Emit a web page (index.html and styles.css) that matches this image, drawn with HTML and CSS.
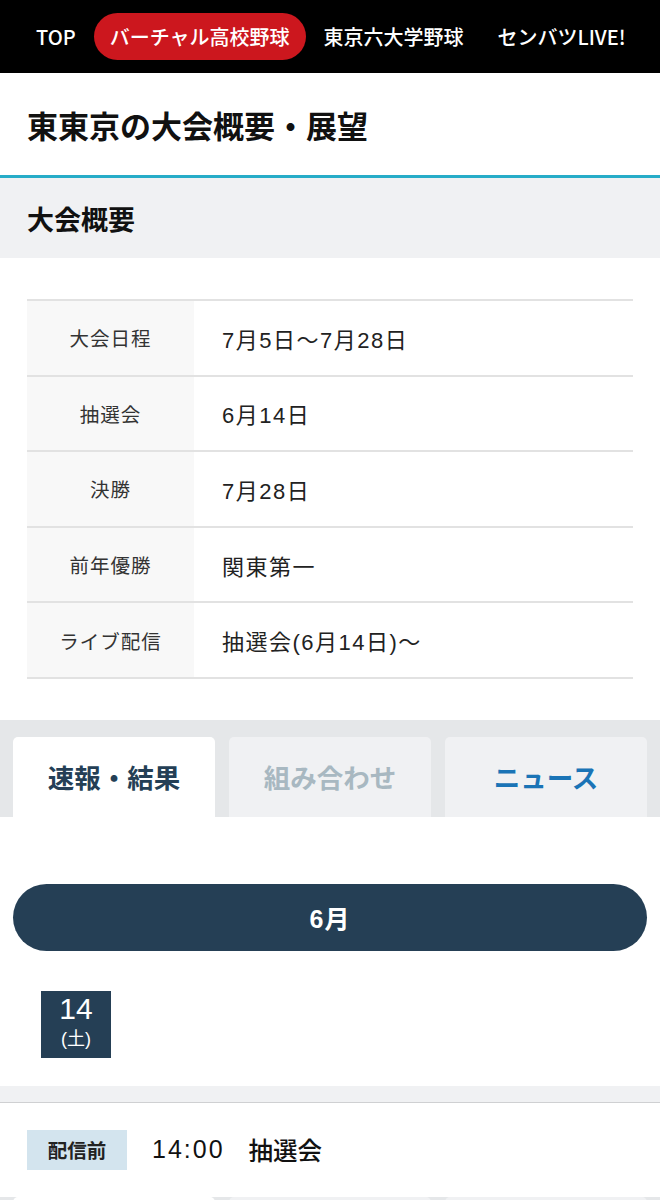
FILE: index.html
```html
<!DOCTYPE html>
<html lang="ja">
<head>
    <meta charset="UTF-8">
    <meta name="viewport" content="width=device-width, initial-scale=1.0">
    <title>東東京の大会概要・展望</title>
    <link rel="stylesheet" href="styles.css">
</head>
<body>

    <!-- Global Navigation -->
    <nav class="global-nav">
        <a class="nav-item" href="#">TOP</a>
        <a class="nav-item is-active" href="#">バーチャル高校野球</a>
        <a class="nav-item" href="#">東京六大学野球</a>
        <a class="nav-item" href="#">センバツLIVE!</a>
    </nav>

    <!-- Page Title -->
    <header class="page-title">
        <h1>東東京の大会概要・展望</h1>
    </header>

    <!-- Overview -->
    <section class="section-head">
        <h2>大会概要</h2>
    </section>

    <div class="overview">
        <table class="overview-table">
            <tr><th>大会日程</th><td>7月5日〜7月28日</td></tr>
            <tr><th>抽選会</th><td>6月14日</td></tr>
            <tr><th>決勝</th><td>7月28日</td></tr>
            <tr><th>前年優勝</th><td>関東第一</td></tr>
            <tr><th>ライブ配信</th><td>抽選会(6月14日)〜</td></tr>
        </table>
    </div>

    <!-- Tabs -->
    <div class="tabs">
        <a class="tab is-current" href="#">速報・結果</a>
        <a class="tab is-disabled" href="#">組み合わせ</a>
        <a class="tab is-link" href="#">ニュース</a>
    </div>

    <!-- Schedule -->
    <div class="schedule">
        <div class="month-bar">6月</div>
        <div class="date-box">
            <span class="date-day">14</span>
            <span class="date-week">(土)</span>
        </div>
    </div>

    <div class="divider"></div>

    <div class="game-row">
        <span class="status-badge">配信前</span>
        <span class="game-time">14:00</span>
        <span class="game-name">抽選会</span>
    </div>

    <!-- Next tab bar (cut off) -->
    <div class="tabs tabs-bottom">
        <span class="tab is-current"></span>
        <span class="tab"></span>
        <span class="tab"></span>
    </div>

</body>
</html>
```

FILE: styles.css
```css
/* Base */
body {
    margin: 0;
    padding: 0;
    font-family: "Liberation Sans", "Noto Sans CJK JP", sans-serif;
    color: #111;
    background-color: #fff;
}

a {
    text-decoration: none;
}

/* Global Navigation */
.global-nav {
    display: flex;
    align-items: center;
    gap: 2px;
    height: 73px;
    padding-left: 20px;
    background-color: #000;
    white-space: nowrap;
    overflow: hidden;
    font-family: "Noto Sans CJK JP", sans-serif;
}

.nav-item {
    display: flex;
    align-items: center;
    height: 47px;
    padding: 0 16px;
    color: #fff;
    font-size: 20px;
    font-weight: 500;
    border-radius: 24px;
}

.nav-item.is-active {
    background-color: #cc171e;
}

/* Page Title */
.page-title {
    display: flex;
    align-items: center;
    height: 102px;
    padding: 0 27px;
    border-bottom: 3px solid #26acc8;
}

.page-title h1 {
    margin: 0;
    font-size: 31px;
    font-weight: 700;
    color: #111;
}

/* Section Head */
.section-head {
    display: flex;
    align-items: center;
    height: 80px;
    padding: 0 27px;
    background-color: #f0f1f3;
}

.section-head h2 {
    margin: 0;
    font-size: 27px;
    font-weight: 700;
    color: #111;
}

/* Overview Table */
.overview {
    padding: 41px 27px 41px;
}

.overview-table {
    width: 100%;
    border-collapse: collapse;
    border-top: 2px solid #e2e2e2;
}

.overview-table tr {
    height: 75.6px;
    border-bottom: 2px solid #e2e2e2;
}

.overview-table th {
    width: 167px;
    padding: 0;
    background-color: #f8f8f8;
    font-size: 19.5px;
    font-weight: 400;
    letter-spacing: 1px;
    color: #333;
    text-align: center;
}

.overview-table td {
    padding: 0 0 0 28px;
    font-size: 22px;
    letter-spacing: 1.5px;
    color: #222;
}

/* Tabs */
.tabs {
    display: grid;
    grid-template-columns: repeat(3, 1fr);
    gap: 14px;
    padding: 17px 13px 0;
    background-color: #e5e7e9;
}

.tab {
    display: flex;
    align-items: center;
    justify-content: center;
    height: 80px;
    background-color: #f0f1f3;
    border-radius: 5px 5px 0 0;
    font-size: 26.5px;
    font-weight: 700;
}

.tab.is-current {
    background-color: #fff;
    color: #243f56;
}

.tab.is-disabled {
    color: #a8b8c1;
}

.tab.is-link {
    color: #1a74b6;
}

.tabs-bottom {
    padding-top: 0;
}

/* Schedule */
.schedule {
    padding: 67px 13px 28px;
}

.month-bar {
    display: flex;
    align-items: center;
    justify-content: center;
    height: 67px;
    border-radius: 34px;
    background-color: #253f55;
    color: #fff;
    font-size: 25px;
    font-weight: 700;
    letter-spacing: 1px;
}

.date-box {
    display: flex;
    flex-direction: column;
    align-items: center;
    justify-content: center;
    width: 70px;
    height: 67px;
    padding-bottom: 4px;
    margin: 40px 0 0 28px;
    box-sizing: border-box;
    background-color: #253f55;
    color: #fff;
}

.date-day {
    font-size: 30px;
    line-height: 34px;
}

.date-week {
    font-size: 18px;
    line-height: 26px;
}

.divider {
    height: 16px;
    background-color: #f0f1f3;
    border-bottom: 1px solid #cfd0d2;
}

/* Game Row */
.game-row {
    display: flex;
    align-items: center;
    padding: 27px;
}

.status-badge {
    display: flex;
    align-items: center;
    justify-content: center;
    width: 100px;
    height: 40px;
    background-color: #d3e4ee;
    font-size: 19.5px;
    font-weight: 700;
    color: #222;
}

.game-time {
    margin-left: 25px;
    font-size: 25px;
    letter-spacing: 2px;
    color: #111;
}

.game-name {
    margin-left: 24px;
    font-size: 24.5px;
    font-weight: 500;
    color: #111;
}
```
